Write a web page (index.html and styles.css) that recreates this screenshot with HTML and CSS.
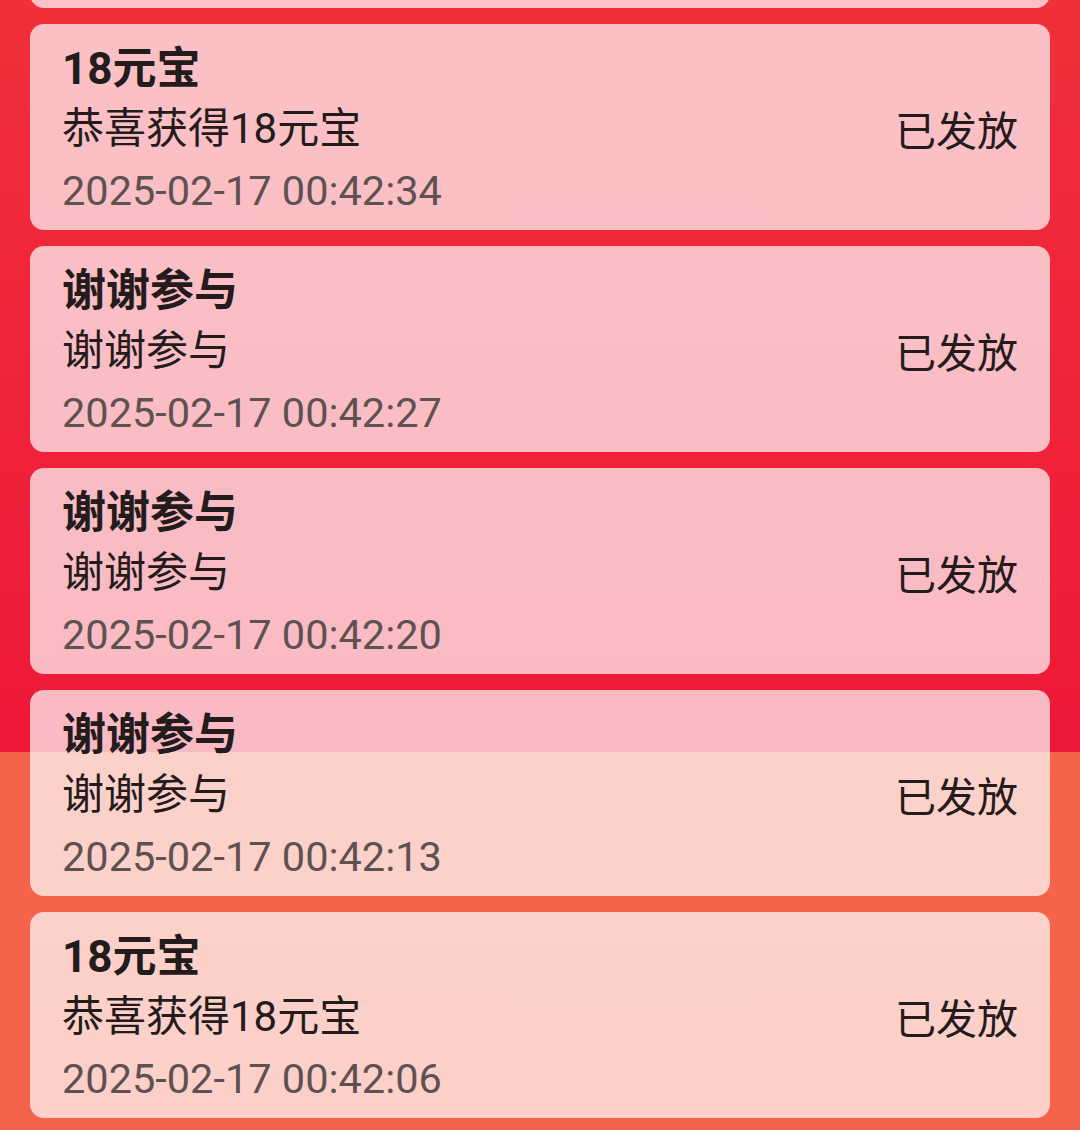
FILE: index.html
```html
<!DOCTYPE html>
<html lang="zh-CN">
<head>
    <meta charset="UTF-8">
    <meta name="viewport" content="width=device-width, initial-scale=1.0">
    <title>中奖记录</title>
    <link rel="stylesheet" href="styles.css">
</head>
<body>
    <div id="record-list">
        <!-- previous record, scrolled almost out of view -->
        <div class="record-item"></div>
        <div class="record-item">
            <div class="record-info">
                <div class="record-title">18元宝</div>
                <div class="record-desc">恭喜获得18元宝</div>
                <div class="record-time">2025-02-17 00:42:34</div>
            </div>
            <div class="record-status">已发放</div>
        </div>
        <div class="record-item">
            <div class="record-info">
                <div class="record-title">谢谢参与</div>
                <div class="record-desc">谢谢参与</div>
                <div class="record-time">2025-02-17 00:42:27</div>
            </div>
            <div class="record-status">已发放</div>
        </div>
        <div class="record-item">
            <div class="record-info">
                <div class="record-title">谢谢参与</div>
                <div class="record-desc">谢谢参与</div>
                <div class="record-time">2025-02-17 00:42:20</div>
            </div>
            <div class="record-status">已发放</div>
        </div>
        <div class="record-item">
            <div class="record-info">
                <div class="record-title">谢谢参与</div>
                <div class="record-desc">谢谢参与</div>
                <div class="record-time">2025-02-17 00:42:13</div>
            </div>
            <div class="record-status">已发放</div>
        </div>
        <div class="record-item">
            <div class="record-info">
                <div class="record-title">18元宝</div>
                <div class="record-desc">恭喜获得18元宝</div>
                <div class="record-time">2025-02-17 00:42:06</div>
            </div>
            <div class="record-status">已发放</div>
        </div>
    </div>
</body>
</html>
```

FILE: styles.css
```css
html, body {
    height: 100%;
}
body {
    margin: 0;
    font-family: Roboto, "Noto Sans CJK SC", sans-serif;
    color: #231b1c;
    background: linear-gradient(to bottom, #f0303a 0, #ee1838 752px, #f6654a 752px, #f5634a 100%);
    overflow: hidden;
}
#record-list {
    display: flex;
    flex-direction: column;
    gap: 16px;
    padding: 0 30px;
    margin-top: -198px;
}
.record-item {
    display: flex;
    justify-content: space-between;
    align-items: center;
    height: 206px;
    padding: 15px 32px 9px;
    box-sizing: border-box;
    background-color: rgba(255, 255, 255, 0.7);
    border-radius: 14px;
}
.record-title {
    font-size: 44px;
    font-weight: bold;
    line-height: 60px;
}
.record-desc {
    font-size: 42px;
    line-height: 60px;
}
.record-time {
    margin-top: 2px;
    font-size: 41.5px;
    line-height: 60px;
    color: #5e5152;
}
.record-status {
    font-size: 41px;
    margin-bottom: 4px;
}
```
